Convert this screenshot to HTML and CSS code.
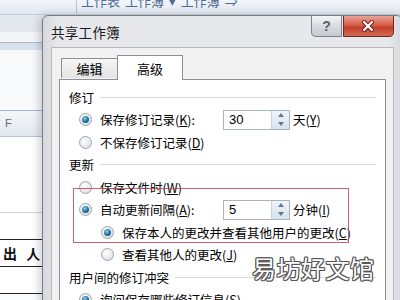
FILE: index.html
```html
<!DOCTYPE html>
<html lang="zh-CN">
  <head>
    <meta charset="UTF-8" />
    <title>共享工作簿</title>
    <link rel="stylesheet" href="styles.css">
  </head>
  <body>
    <!-- excel sheet behind the dialog -->
    <div class="sheet">
      <div class="ribbon">
        <span class="sep"></span>
        <span class="ribbon-tabs">工作表 工作簿 ▾ 工作簿 ⇒</span>
      </div>
      <div class="band-a"></div>
      <div class="band-b"></div>
      <div class="band-c"></div>
      <div class="blank"></div>
      <div class="col-head">F</div>
      <div class="cell tall"></div>
      <div class="cell light"></div>
      <div class="cell dark">出 人</div>
      <div class="cell dark"></div>
    </div>

    <div class="dialog">
      <div class="titlebar">
        <span class="title">共享工作簿</span>
        <svg class="wincaps" width="84" height="21" viewBox="0 0 84 21">
          <defs>
            <linearGradient id="gq" x1="0" y1="0" x2="0" y2="1">
              <stop offset="0" stop-color="#f3f5f7"/>
              <stop offset="0.5" stop-color="#d6dbe0"/>
              <stop offset="1" stop-color="#c3c9d0"/>
            </linearGradient>
            <linearGradient id="gx" x1="0" y1="0" x2="0" y2="1">
              <stop offset="0" stop-color="#eaa596"/>
              <stop offset="0.45" stop-color="#d65c47"/>
              <stop offset="0.55" stop-color="#c23f2b"/>
              <stop offset="1" stop-color="#d66e56"/>
            </linearGradient>
          </defs>
          <path d="M0.5 0 V16 Q0.5 20.5 5 20.5 H30.5 V0" fill="url(#gq)" stroke="#7d838b"/>
          <text x="15.5" y="15" text-anchor="middle" class="qmark">?</text>
          <path d="M32.5 0 V20.5 H78 Q82.5 20.5 82.5 16 V0" fill="url(#gx)" stroke="#6e2a22"/>
          <path d="M53 6 L61 14 M61 6 L53 14" stroke="#6a2018" stroke-width="4" stroke-linecap="round"/>
          <path d="M53 6 L61 14 M61 6 L53 14" stroke="#fff" stroke-width="2.2" stroke-linecap="round"/>
        </svg>
      </div>

      <div class="client">
        <div class="tabs">
          <span class="tab">编辑</span>
          <span class="tab active">高级</span>
        </div>
        <div class="panel">
          <div class="group"><span>修订</span></div>
          <div class="row">
            <span class="radio on"></span>
            <span class="label">保存修订记录(<u>K</u>):</span>
            <span class="spin"><span class="val">30</span><span class="arrows"><i class="up"></i><i class="down"></i></span></span>
            <span class="unit">天(<u>Y</u>)</span>
          </div>
          <div class="row">
            <span class="radio"></span>
            <span>不保存修订记录(<u>D</u>)</span>
          </div>

          <div class="group"><span>更新</span></div>
          <div class="row">
            <span class="radio"></span>
            <span>保存文件时(<u>W</u>)</span>
          </div>
          <div class="row">
            <span class="radio on"></span>
            <span class="label">自动更新间隔(<u>A</u>):</span>
            <span class="spin"><span class="val">5</span><span class="arrows"><i class="up"></i><i class="down"></i></span></span>
            <span class="unit">分钟(<u>I</u>)</span>
          </div>
          <div class="row sub">
            <span class="radio on"></span>
            <span>保存本人的更改并查看其他用户的更改(<u>C</u>)</span>
          </div>
          <div class="row sub">
            <span class="radio"></span>
            <span>查看其他人的更改(<u>J</u>)</span>
          </div>

          <div class="group"><span>用户间的修订冲突</span></div>
          <div class="row">
            <span class="radio on"></span>
            <span>询问保存哪些修订信息(<u>S</u>)</span>
          </div>
        </div>
      </div>
    </div>

    <div class="mark-box"></div>
    <div class="watermark">易坊好文馆</div>
  </body>
</html>
```

FILE: styles.css
```css
body {
  margin: 0;
  width: 400px;
  height: 300px;
  overflow: hidden;
  position: relative;
  font-family: "Noto Sans CJK SC", "Liberation Sans", sans-serif;
  background: #fafbfc;
}

/* ---- sheet ---- */
.sheet {
  width: 400px;
}

.ribbon {
  height: 14px;
  background: linear-gradient(#f2f5f9, #e2e8f0);
  border-bottom: 1px solid #c3cfdd;
  display: flex;
  overflow: hidden;
}

.ribbon .sep {
  width: 1px;
  height: 14px;
  margin-left: 76px;
  background: #b5c3d3;
}

.ribbon-tabs {
  margin-left: 4px;
  margin-top: -6px;
  font-size: 13px;
  line-height: 14px;
  color: #4d6a94;
  white-space: nowrap;
  word-spacing: 2px;
}

.band-a {
  height: 17px;
  background: #e4e9f0;
}

.band-b {
  height: 10px;
  background: #f3f5f8;
  border-bottom: 1px solid #a9bbd0;
}

.band-c {
  height: 7px;
  background: #d8e2ed;
}

.blank {
  height: 60px;
  background: #f8f9fb;
}

.col-head {
  height: 25px;
  border-top: 1px solid #a5b7cc;
  border-bottom: 1px solid #b3c4d6;
  background: linear-gradient(#f3f6f9, #e3e9f0);
  font-family: "Liberation Sans", sans-serif;
  font-size: 11px;
  line-height: 25px;
  color: #666;
  padding-left: 5px;
}

.cell {
  background: #fff;
  font-size: 14px;
  padding-left: 3px;
  letter-spacing: 3px;
  font-weight: bold;
  color: #111;
}

.cell.tall {
  height: 75px;
  border-bottom: 1px solid #d2d2d2;
}

.cell.light {
  height: 26px;
  border-bottom: 1px solid #222;
}

.cell.dark {
  height: 26px;
  line-height: 26px;
  border-bottom: 1px solid #222;
}

/* ---- dialog ---- */
.dialog {
  position: absolute;
  left: 42px;
  top: 15px;
  width: 343px;
  height: 290px;
  padding: 0 8px;
  background: linear-gradient(90deg, #d5d8dc, #e6e8eb 4%, #e6e8eb 96%, #d5d8dc);
  border: 1px solid #7a7e84;
  border-radius: 6px 6px 0 0;
  box-shadow: -3px 0 8px rgba(0, 0, 0, 0.18);
}

.titlebar {
  height: 31px;
  display: flex;
  align-items: flex-start;
  justify-content: space-between;
}

.title {
  font-size: 13.5px;
  line-height: 32px;
  color: #1a1a1a;
  letter-spacing: 0.3px;
}

.wincaps {
  display: block;
  flex: none;
  margin-right: -1px;
}

.qmark {
  font-family: "Liberation Sans", sans-serif;
  font-weight: bold;
  font-size: 14px;
  fill: #5a5f66;
}

.client {
  height: 259px;
  background: #f2f2f2;
  border: 1px solid #b5b8bc;
  border-bottom: none;
  padding: 0 7px;
  overflow: hidden;
}

.tabs {
  display: flex;
  align-items: flex-end;
  height: 31px;
  padding-left: 2px;
  position: relative;
  z-index: 1;
}

.tab {
  width: 55px;
  height: 19px;
  border: 1px solid #8c8f96;
  border-bottom: none;
  background: linear-gradient(#f6f6f6, #e3e3e3);
  font-size: 13px;
  line-height: 20px;
  text-align: center;
  color: #000;
  margin-bottom: 1px;
}

.tab.active {
  width: 64px;
  height: 24px;
  line-height: 25px;
  margin-left: -1px;
  background: #fff;
  margin-bottom: -1px;
}

.panel {
  height: 240px;
  background: #fff;
  border: 1px solid #8c8f96;
  padding: 6px 9px 0 9px;
  font-size: 12.5px;
  color: #000;
}

.group {
  height: 22.5px;
  display: flex;
  align-items: center;
  gap: 6px;
}

.group::after {
  content: "";
  flex: 1;
  height: 1px;
  background: #d9dde2;
}

.row {
  height: 22.5px;
  display: flex;
  align-items: center;
  padding-left: 10px;
  white-space: nowrap;
}

.row.sub {
  padding-left: 32px;
}

.radio {
  width: 11px;
  height: 11px;
  border-radius: 50%;
  border: 1px solid #9ea5ad;
  background: radial-gradient(circle at 40% 35%, #fff, #e6e8eb 60%, #cfd3d8);
  margin-right: 8px;
  flex: none;
  display: flex;
  align-items: center;
  justify-content: center;
}

.radio.on::after {
  content: "";
  width: 7px;
  height: 7px;
  border-radius: 50%;
  background: radial-gradient(circle at 40% 35%, #8ad0ea, #1d6d98 55%, #144d70);
}

.label {
  width: 123px;
}

.spin {
  width: 65px;
  height: 18px;
  border: 1px solid #aab3c0;
  display: flex;
  justify-content: space-between;
  font-family: "Liberation Sans", sans-serif;
  font-size: 13px;
  line-height: 18px;
}

.spin .val {
  padding-left: 5px;
}

.spin .arrows {
  width: 17px;
  display: flex;
  flex-direction: column;
  border-left: 1px solid #c8d2de;
  background: linear-gradient(#eef3f8, #d8e2ec);
}

.spin i {
  flex: 1;
  display: flex;
  align-items: center;
  justify-content: center;
}

.spin i.up::after {
  content: "";
  border: 3px solid transparent;
  border-bottom: 4px solid #5f7896;
  border-top: none;
}

.spin i.down::after {
  content: "";
  border: 3px solid transparent;
  border-top: 4px solid #5f7896;
  border-bottom: none;
}

.unit {
  margin-left: 3px;
}

/* ---- annotations over the screenshot ---- */
.mark-box {
  position: absolute;
  left: 73px;
  top: 188px;
  width: 274px;
  height: 53px;
  border: 1.5px solid rgba(196, 70, 80, 0.85);
}

.watermark {
  position: absolute;
  left: 252px;
  top: 253px;
  font-size: 24px;
  line-height: 30px;
  color: #fff;
  letter-spacing: 0.5px;
  text-shadow:
    1px 0 0 #555, -1px 0 0 #555, 0 1px 0 #555, 0 -1px 0 #555,
    1px 1px 0 #555, -1px -1px 0 #555, 1px -1px 0 #555, -1px 1px 0 #555;
}
```
